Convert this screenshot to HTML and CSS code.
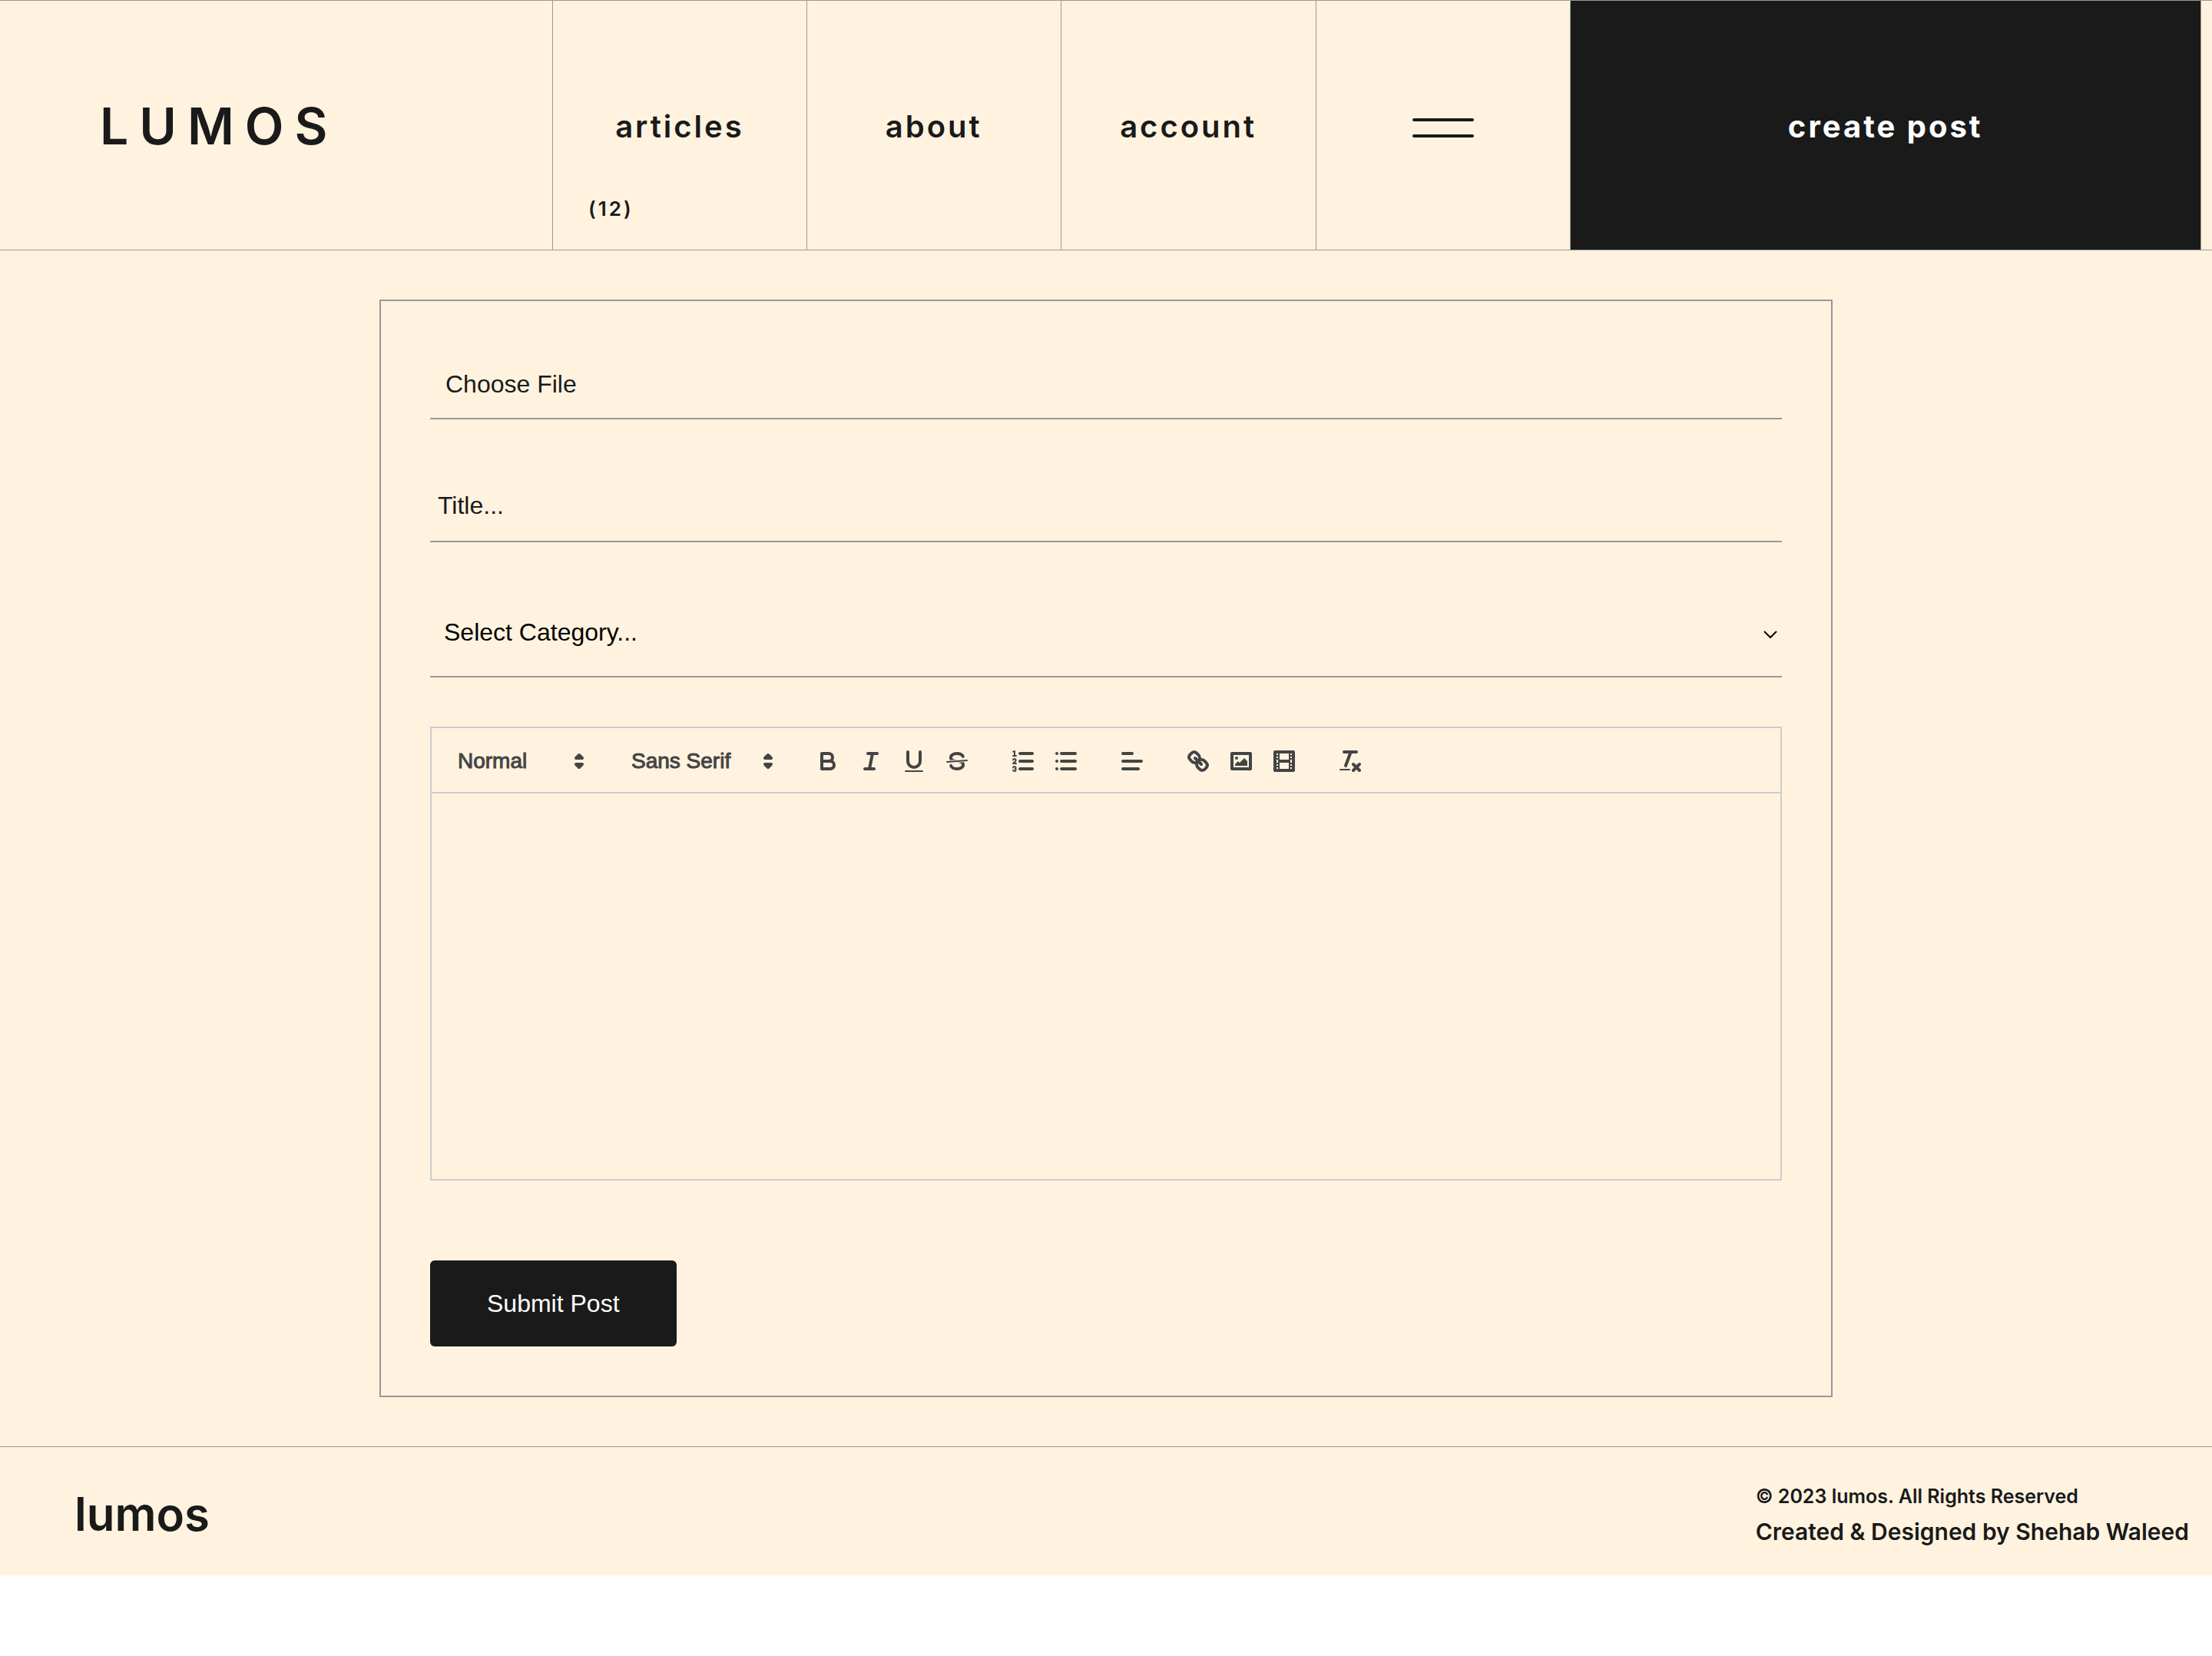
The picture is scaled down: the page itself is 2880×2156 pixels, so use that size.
FILE: index.html
```html
<!DOCTYPE html>
<html lang="en">
<head>
<meta charset="utf-8">
<meta name="viewport" content="width=device-width, initial-scale=1">
<title>lumos – create post</title>
<link rel="stylesheet" href="styles.css">
</head>
<body>
<div class="page">
  <header class="header">
    <a class="brand" href="#">LUMOS</a>
    <nav class="nav">
      <a class="nav-link" href="#">articles<span class="count">(12)</span></a>
      <a class="nav-link" href="#">about</a>
      <a class="nav-link" href="#">account</a>
    </nav>
    <button class="menu" type="button" aria-label="Menu"><span class="menu-bar"></span><span class="menu-bar"></span></button>
    <a class="create" href="#">create post</a>
  </header>

  <main class="main">
    <form class="form">
      <input class="field file" type="file" aria-label="Choose File">
      <input class="field title" type="text" placeholder="Title..." aria-label="Title">
      <div class="select-wrap">
        <select class="field select" aria-label="Category">
          <option>Select Category...</option>
        </select>
        <svg class="chevron" viewBox="0 0 18 10"><path d="M1 1l8 8 8-8"/></svg>
      </div>

      <div class="editor">
        <div class="toolbar">
          <div class="group">
            <button class="picker picker-header" type="button">Normal
              <svg class="icon" viewBox="0 0 18 18"><polygon points="7 11 9 13 11 11 7 11"/><polygon points="7 7 9 5 11 7 7 7"/></svg>
            </button>
          </div>
          <div class="group">
            <button class="picker picker-font" type="button">Sans Serif
              <svg class="icon" viewBox="0 0 18 18"><polygon points="7 11 9 13 11 11 7 11"/><polygon points="7 7 9 5 11 7 7 7"/></svg>
            </button>
          </div>
          <div class="group">
            <button class="tool" type="button" aria-label="Bold"><svg class="icon" viewBox="0 0 18 18"><path d="M5,4H9.5A2.5,2.5,0,0,1,12,6.5v0A2.5,2.5,0,0,1,9.5,9H5V4Z"/><path d="M5,9h5.5A2.5,2.5,0,0,1,13,11.5v0A2.5,2.5,0,0,1,10.5,14H5V9Z"/></svg></button>
            <button class="tool" type="button" aria-label="Italic"><svg class="icon" viewBox="0 0 18 18"><path d="M7,4H13M5,14H11M8,14L10,4"/></svg></button>
            <button class="tool" type="button" aria-label="Underline"><svg class="icon" viewBox="0 0 18 18"><path d="M5,3V9a4.012,4.012,0,0,0,4,4H9a4.012,4.012,0,0,0,4-4V3"/><rect class="fill" height="1" rx="0.5" ry="0.5" width="12" x="3" y="15"/></svg></button>
            <button class="tool" type="button" aria-label="Strikethrough"><svg class="icon" viewBox="0 0 18 18"><path class="thin" d="M15.5,8.5L2.5,9.5"/><path class="fill" d="M9.007,8C6.542,7.791,6,7.519,6,6.5,6,5.792,7.283,5,9,5c1.571,0,2.765.679,2.969,1.309a1,1,0,0,0,1.9-.617C13.356,4.106,11.354,3,9,3,6.2,3,4,4.538,4,6.5a3.2,3.2,0,0,0,.5,1.843Z"/><path class="fill" d="M8.984,10C11.457,10.208,12,10.479,12,11.5c0,0.708-1.283,1.5-3,1.5-1.571,0-2.765-.679-2.969-1.309a1,1,0,1,0-1.9.617C4.644,13.894,6.646,15,9,15c2.8,0,5-1.538,5-3.5a3.2,3.2,0,0,0-.5-1.843Z"/></svg></button>
          </div>
          <div class="group">
            <button class="tool" type="button" aria-label="Ordered list"><svg class="icon" viewBox="0 0 18 18"><path d="M7,4H15M7,9H15M7,14H15"/><path class="thin" d="M2.5,5.5H4.5"/><path class="fill" d="M3.5,6A0.5,0.5,0,0,1,3,5.5V3.085l-0.276.138A0.5,0.5,0,0,1,2.053,3c-0.124-.247-0.023-0.324.224-0.447l1-.5A0.5,0.5,0,0,1,4,2.5v3A0.5,0.5,0,0,1,3.5,6Z"/><path class="thin" d="M4.5,10.5h-2c0-.234,1.85-1.076,1.85-2.234A0.959,0.959,0,0,0,2.5,8.156"/><path class="thin" d="M2.5,14.846a0.959,0.959,0,0,0,1.85-.109A0.7,0.7,0,0,0,3.75,14a0.688,0.688,0,0,0,.6-0.736,0.959,0.959,0,0,0-1.85-.109"/></svg></button>
            <button class="tool" type="button" aria-label="Bullet list"><svg class="icon" viewBox="0 0 18 18"><path d="M6,4H15M6,9H15M6,14H15M3,4H3M3,9H3M3,14H3"/></svg></button>
          </div>
          <div class="group">
            <button class="tool" type="button" aria-label="Align"><svg class="icon" viewBox="0 0 18 18"><path d="M3,9H15M3,14H13M3,4H9"/></svg></button>
          </div>
          <div class="group">
            <button class="tool" type="button" aria-label="Link"><svg class="icon" viewBox="0 0 18 18"><path d="M7,7L11,11"/><path d="M8.9,4.577a3.476,3.476,0,0,1,.36,4.679A3.476,3.476,0,0,1,4.577,8.9C3.185,7.5,2.035,6.4,4.217,4.217S7.5,3.185,8.9,4.577Z"/><path d="M13.423,9.1a3.476,3.476,0,0,0-4.679-.36,3.476,3.476,0,0,0,.36,4.679c1.392,1.392,2.5,2.542,4.679.36S14.815,10.5,13.423,9.1Z"/></svg></button>
            <button class="tool" type="button" aria-label="Image"><svg class="icon" viewBox="0 0 18 18"><rect height="10" width="12" x="3" y="4"/><circle class="fill" cx="6" cy="7" r="1"/><polygon class="fill" points="5 12 5 11 7 9 8 10 11 7 13 9 13 12"/></svg></button>
            <button class="tool" type="button" aria-label="Video"><svg class="icon" viewBox="0 0 18 18"><rect height="12" width="12" x="3" y="3"/><path class="fill" d="M5,3h1v12H5ZM12,3h1v12H12ZM5,8h8v2H5ZM3,5h3v1H3ZM3,7h3v1H3ZM3,10h3v1H3ZM3,12h3v1H3ZM12,5h3v1H12ZM12,7h3v1H12ZM12,10h3v1H12ZM12,12h3v1H12Z"/></svg></button>
          </div>
          <div class="group">
            <button class="tool" type="button" aria-label="Clear formatting"><svg class="icon" viewBox="0 0 18 18"><path d="M5,3H13M6,12L9.35,3M11,11L15,15M15,11L11,15"/><rect class="fill" height="1" rx="0.5" ry="0.5" width="7" x="2" y="14"/></svg></button>
          </div>
        </div>
        <div class="content" contenteditable="true" role="textbox" aria-label="Post body"></div>
      </div>

      <button class="submit" type="submit">Submit Post</button>
    </form>
  </main>

  <footer class="footer">
    <a class="footer-brand" href="#">lumos</a>
    <div class="credits">
      <p class="copyright">© 2023 lumos. All Rights Reserved</p>
      <p class="author">Created &amp; Designed by Shehab Waleed</p>
    </div>
  </footer>
</div>
</body>
</html>
```
FILE: styles.css
```css
:root {
  --cream: #fff3e0;
  --ink: #1a1a1a;
  --line: #999;
  --line-light: #ccc;
  --display: Inter, "Open Sans", sans-serif;
  --text: "Liberation Sans", Arial, sans-serif;
}

*, *::before, *::after { box-sizing: border-box; }

body {
  margin: 0;
  background: #fff;
  color: var(--ink);
  font-family: var(--text);
  font-size: 32px;
}

a { color: inherit; text-decoration: none; }
button { margin: 0; border: 0; background: none; font: inherit; color: inherit; cursor: pointer; }

.page { background: var(--cream); }

/* header */
.header {
  display: grid;
  grid-template-columns: 25% 34.5% 11.5% 28.5%;
  min-height: 326px;
  border-top: 1px solid var(--line);
  border-bottom: 1px solid var(--line);
  font-family: var(--display);
}

.header > * { border-right: 1px solid var(--line); }

.brand {
  display: flex;
  align-items: center;
  padding: 2px 0 0 130px;
  font-size: 66px;
  font-weight: 600;
  letter-spacing: 14px;
}

.nav { display: grid; grid-template-columns: repeat(3, 1fr); }

.nav-link {
  position: relative;
  display: flex;
  align-items: center;
  justify-content: center;
  padding-top: 2px;
  font-size: 40px;
  font-weight: 600;
  letter-spacing: 3px;
}

.nav-link:not(:last-child) { border-right: 1px solid var(--line); }

.count {
  position: absolute;
  left: 46px;
  bottom: 37px;
  font-size: 26px;
  line-height: 32px;
}

.menu {
  display: flex;
  flex-direction: column;
  align-items: center;
  justify-content: center;
  gap: 17px;
  padding: 6px 0 0;
}

.menu-bar { width: 80px; height: 4px; border-radius: 2px; background: var(--ink); }

.create {
  display: flex;
  align-items: center;
  justify-content: center;
  padding-top: 2px;
  background: var(--ink);
  color: #fff;
  font-size: 40px;
  font-weight: 700;
  letter-spacing: 3px;
}

/* form */
.main { padding: 64px; }

.form {
  display: flex;
  flex-direction: column;
  gap: 64px;
  max-width: 1892px;
  margin: 0 auto;
  padding: 64px;
  border: 2px solid var(--line);
}

.field {
  width: 100%;
  margin: 0;
  border: 0;
  border-bottom: 2px solid var(--line);
  border-radius: 0;
  background: transparent;
  color: var(--ink);
  font: 32px var(--text);
}

.file { height: 90px; padding: 0 20px; line-height: 88px; color: transparent; }
.file::file-selector-button {
  margin: 0;
  padding: 0;
  border: 0;
  background: none;
  color: var(--ink);
  font: inherit;
}

.title { height: 96px; padding: 2px 10px 0; }
.title::placeholder { color: var(--ink); opacity: 1; }

.select-wrap { display: grid; align-items: center; }
.select-wrap > * { grid-area: 1 / 1; }
.select { height: 112px; padding: 0 18px 4px; appearance: none; color: #000; }
.chevron {
  justify-self: end;
  width: 18px;
  height: 10px;
  margin-right: 6px;
  fill: none;
  stroke: #000;
  stroke-width: 2;
  pointer-events: none;
}

/* rich text editor */
.editor { border: 2px solid var(--line-light); }

.toolbar {
  display: flex;
  flex-wrap: wrap;
  gap: 0 30px;
  padding: 19px 16px 16px;
  border-bottom: 2px solid var(--line-light);
  color: #444;
}

.group { display: flex; }

.picker {
  display: flex;
  align-items: center;
  justify-content: space-between;
  height: 48px;
  padding: 0 2px 0 18px;
  font-size: 28px;
  -webkit-text-stroke: 1px #444;
}
.picker-header { width: 196px; }
.picker-font { width: 216px; }

.tool { width: 56px; height: 48px; padding: 6px 10px; }

.icon {
  display: block;
  width: 36px;
  height: 36px;
  fill: none;
  stroke: #444;
  stroke-width: 2;
  stroke-linecap: round;
  stroke-linejoin: round;
}
.icon .fill { fill: #444; stroke: none; }
.icon .thin { stroke-width: 1; }

.content { min-height: 502px; outline: 0; }

.submit {
  align-self: flex-start;
  margin-top: 40px;
  padding: 0 74px;
  border-radius: 6px;
  background: var(--ink);
  color: #fff;
  line-height: 112px;
}

/* footer */
.footer {
  display: flex;
  align-items: center;
  justify-content: space-between;
  min-height: 168px;
  padding: 6px 30px 0 97px;
  border-top: 1px solid var(--line);
  font-family: var(--display);
  font-weight: 600;
}

.footer-brand { font-size: 60px; }
.credits p { margin: 0; }
.copyright { font-size: 25px; line-height: 46px; }
.author { font-size: 30px; line-height: 46px; }
```
